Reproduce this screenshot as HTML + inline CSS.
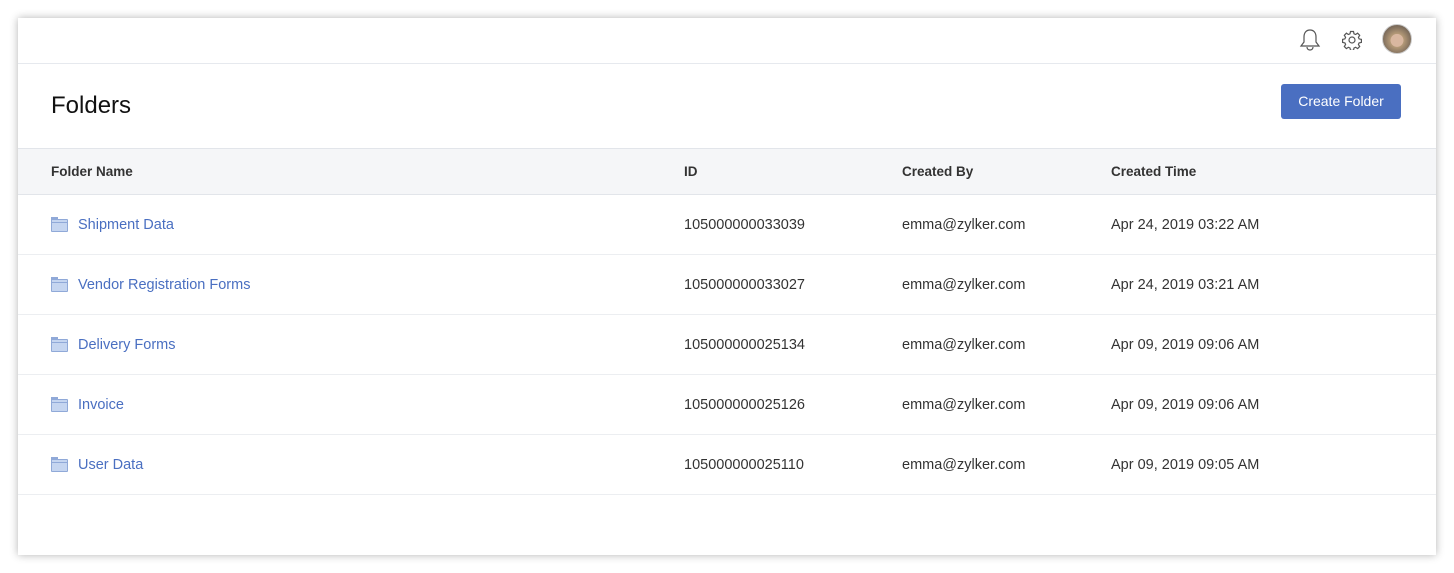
<!DOCTYPE html><html><head><style>
body{margin:0;width:1454px;height:573px;background:#fff;font-family:"Liberation Sans",sans-serif;position:relative;overflow:hidden}
.card{position:absolute;left:18px;top:18px;width:1418px;height:537px;background:#fff;box-shadow:0 0 8px rgba(0,0,0,.3)}
.top{height:45px;border-bottom:1px solid #e6e9ee;position:relative}
h1{position:absolute;left:33px;top:74px;margin:0;font-size:24px;font-weight:normal;color:#111}
.btn{position:absolute;left:1263px;top:66px;width:120px;height:35px;background:#4a6fc1;color:#fff;border-radius:3px;font-size:14px;line-height:35px;text-align:center}
.th{position:absolute;top:130px;left:0;width:1418px;height:45px;background:#f5f6f8;border-top:1px solid #e2e5ea;border-bottom:1px solid #e2e5ea}
.th span,.row span{position:absolute;font-size:14px}
.th span{top:15px;font-weight:bold;color:#333;font-size:13.5px}
.row{position:absolute;left:0;width:1418px;height:59px;border-bottom:1px solid #eceef1}
.row span{top:22px;color:#333;font-size:14.5px}
.row .n{color:#4a6fc1;left:60px}
.f{position:absolute;left:33px;top:24px;width:17px;height:13px;background:#c5d5f0;border:1px solid #90a9d8;box-sizing:border-box;border-radius:1px}
.f:before{content:"";position:absolute;left:-1px;top:-3px;width:7px;height:3px;background:#90a9d8}
.f:after{content:"";position:absolute;left:0;top:2px;width:15px;height:1px;background:#90a9d8}
</style></head><body><div class="card">
<div class="top">
<svg style="position:absolute;left:1281px;top:10px" width="22" height="24" viewBox="0 0 22 24" fill="none" stroke="#555" stroke-width="1.2"><path d="M11 2c-4 0-6 3-6 7v5l-3 4h18l-3-4V9c0-4-2-7-6-7zM8 19c0 2 1.5 3 3 3s3-1 3-3"/></svg>
<svg style="position:absolute;left:1324px;top:12px" width="20" height="20" viewBox="0 0 20 20" fill="none" stroke="#555" stroke-width="1.2"><circle cx="10" cy="10" r="3"/><path d="M8.5 1.5h3l.5 2.3 1.6.7 2-1.3 2.1 2.1-1.3 2 .7 1.6 2.3.5v3l-2.3.5-.7 1.6 1.3 2-2.1 2.1-2-1.3-1.6.7-.5 2.3h-3l-.5-2.3-1.6-.7-2 1.3-2.1-2.1 1.3-2-.7-1.6-2.3-.5v-3l2.3-.5.7-1.6-1.3-2 2.1-2.1 2 1.3 1.6-.7z"/></svg>
<div style="position:absolute;left:1364px;top:6px;width:28px;height:28px;border-radius:50%;background:radial-gradient(circle at 50% 55%,#d9b7a0 0 30%,#b59a78 32%,#7a6a5a 70%);border:1px solid #ccc"></div>
</div>
<h1>Folders</h1><div class="btn">Create Folder</div>
<div class="th"><span style="left:33px">Folder Name</span><span style="left:666px">ID</span><span style="left:884px">Created By</span><span style="left:1093px">Created Time</span></div>
<div class="row" style="top:177px"><i class="f"></i><span class="n">Shipment Data</span><span style="left:666px">105000000033039</span><span style="left:884px">emma@zylker.com</span><span style="left:1093px">Apr 24, 2019 03:22 AM</span></div>
<div class="row" style="top:237px"><i class="f"></i><span class="n">Vendor Registration Forms</span><span style="left:666px">105000000033027</span><span style="left:884px">emma@zylker.com</span><span style="left:1093px">Apr 24, 2019 03:21 AM</span></div>
<div class="row" style="top:297px"><i class="f"></i><span class="n">Delivery Forms</span><span style="left:666px">105000000025134</span><span style="left:884px">emma@zylker.com</span><span style="left:1093px">Apr 09, 2019 09:06 AM</span></div>
<div class="row" style="top:357px"><i class="f"></i><span class="n">Invoice</span><span style="left:666px">105000000025126</span><span style="left:884px">emma@zylker.com</span><span style="left:1093px">Apr 09, 2019 09:06 AM</span></div>
<div class="row" style="top:417px"><i class="f"></i><span class="n">User Data</span><span style="left:666px">105000000025110</span><span style="left:884px">emma@zylker.com</span><span style="left:1093px">Apr 09, 2019 09:05 AM</span></div>
</div></body></html>
